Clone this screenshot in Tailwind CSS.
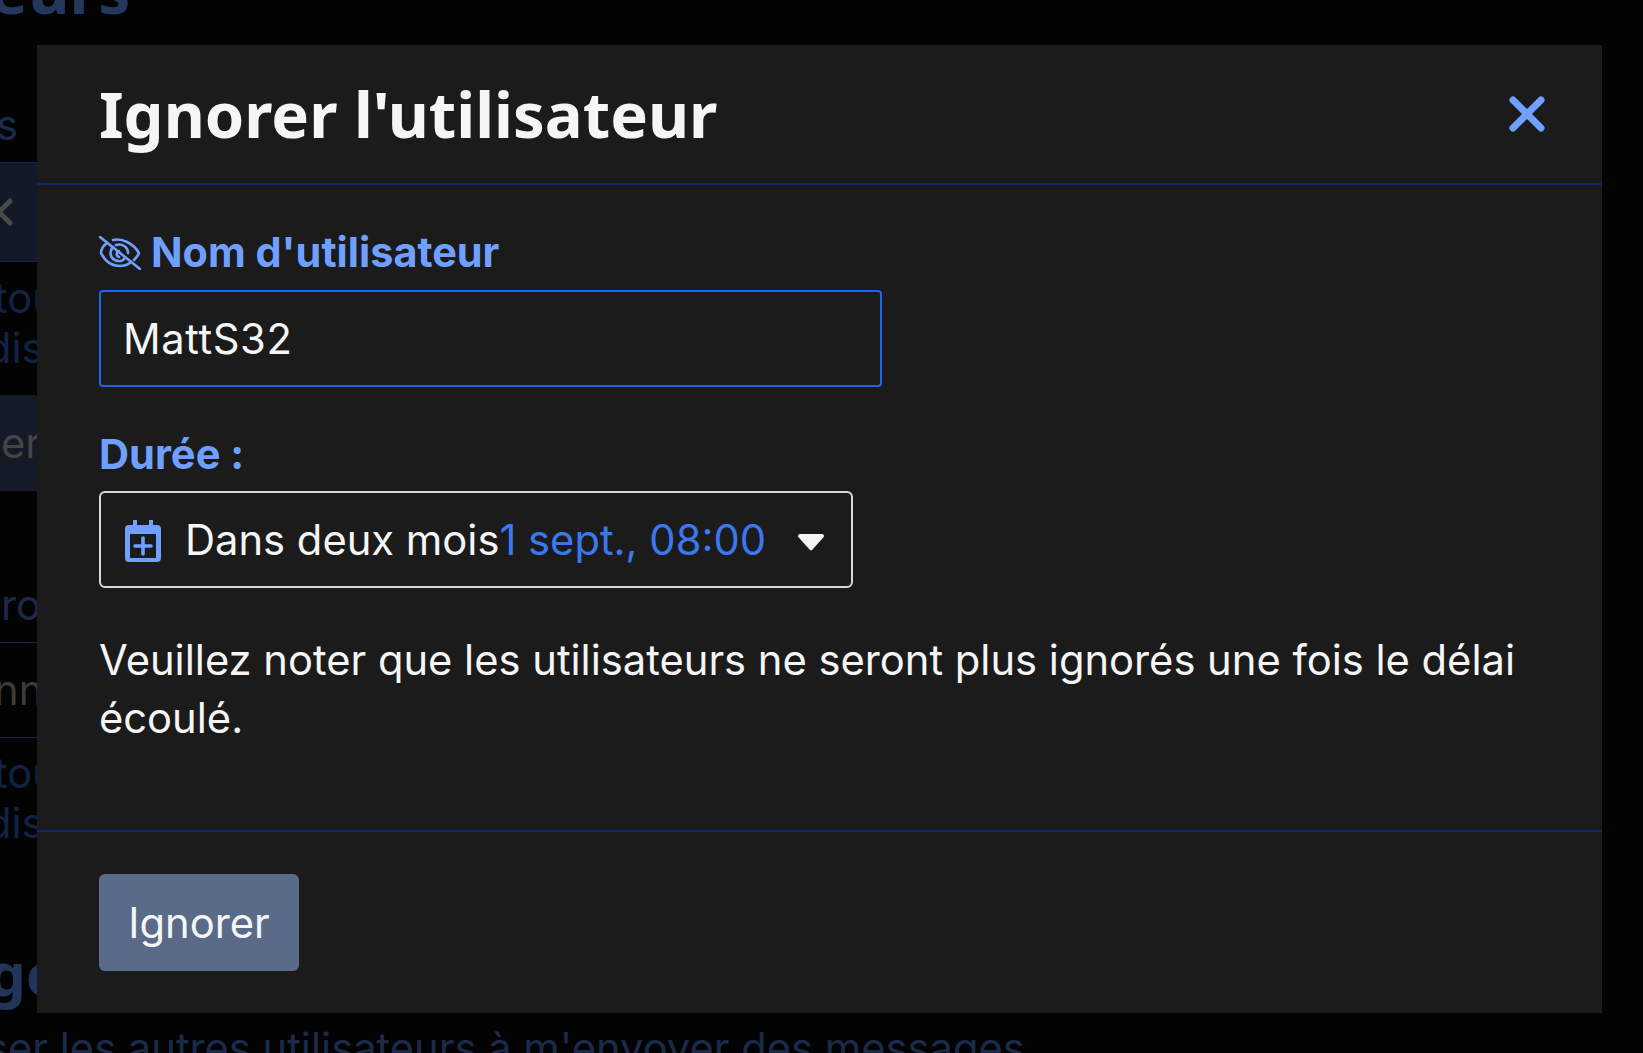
<!DOCTYPE html>
<html lang="fr"><head><meta charset="utf-8"><script src="https://cdn.jsdelivr.net/npm/@tailwindcss/browser@4"></script></head>
<body class="bg-[#030303]">
<div class="relative w-[1643px] h-[1053px] overflow-hidden bg-[#030303] font-['Inter',sans-serif]">
  <!-- dimmed page behind -->
  <div class="flex flex-col w-[1643px] h-[1053px] overflow-hidden [&>*]:shrink-0">
    <div class="h-[15px] -mt-[40px] mb-[40px] -ml-[242px] font-['Noto_Sans',sans-serif] font-bold text-[64px] leading-[60px] text-[#24375c] whitespace-nowrap">Utilisateurs</div>
    <div class="mt-[79px] h-[68px] -ml-[44px] text-[41.7px] leading-[62px] text-[#1b2a49] whitespace-nowrap">ers</div>
    <div class="h-[100px] w-[100px] flex items-center bg-[#131a27] border-y border-[#0f2552] text-[#444]">
      <svg class="-ml-[14px]" width="30" height="30" viewBox="0 0 30 30" fill="none" stroke="#4a4a4a" stroke-width="5" stroke-linecap="round" stroke-linejoin="round"><path d="M24 4 L13 15 L24 26"/></svg>
    </div>
    <div class="mt-[11px] -ml-[6px] text-[41.7px] leading-[50px] text-[#122245] whitespace-nowrap">
      <div>tout</div><div class="-ml-[8px]">disc</div>
    </div>
    <div class="mt-[22px] h-[96px] w-[100px] flex items-center bg-[#141a26] text-[41.7px] text-[#454545]"><span class="ml-[1px]">er</span></div>
    <div class="mt-[84px] ml-[1px] h-[67px] text-[41.7px] leading-[60px] text-[#1b2a49] whitespace-nowrap">ro</div>
    <div class="h-[96px] w-[100px] border-y border-[#0f2552] flex items-center text-[41.7px] text-[#3a3a3a]"><span class="-ml-[6px]">nn</span></div>
    <div class="mt-[10px] -ml-[6px] text-[41.7px] leading-[50px] text-[#122245] whitespace-nowrap">
      <div>tout</div><div class="-ml-[8px]">disc</div>
    </div>
    <div class="mt-[95px] -ml-[48px] h-[60px] font-['Noto_Sans',sans-serif] font-bold text-[60px] leading-[60px] text-[#22345a] whitespace-nowrap">age</div>
    <div class="mt-[20px] -ml-[14px] text-[41.7px] leading-[50px] text-[#1b2a49] whitespace-nowrap">ser les autres utilisateurs à m'envoyer des messages</div>
  </div>

  <!-- modal -->
  <div class="absolute left-[37px] top-[45px] w-[1565px] h-[968px] bg-[#1b1b1b] flex flex-col text-white">
    <div class="h-[140px] px-[62px] flex items-center justify-between border-b-2 border-[#0b2a6f] shrink-0">
      <h1 class="font-['Noto_Sans',sans-serif] font-bold text-[63.3px] leading-[80px] text-[#f5f5f5] whitespace-nowrap">Ignorer l'utilisateur</h1>
      <svg class="mr-[-5px]" width="36" height="36" viewBox="0 0 36 36" fill="none" stroke="#70a0ff" stroke-width="7" stroke-linecap="round"><path d="M4 4 L32 32 M32 4 L4 32"/></svg>
    </div>
    <div class="flex-1 px-[62px] pt-[43px]">
      <label class="flex items-center gap-[10px] h-[48px] text-[41.4px] font-bold text-[#70a0ff]">
        <svg class="mt-[2px]" width="42" height="34" viewBox="0 0 42 34" fill="none" stroke="#70a0ff" stroke-width="2.6" stroke-linecap="round" stroke-linejoin="round"><path d="M1 1 L41 33"/><path d="M8 7 C4 10 2 13 2 17 C6 25 13 30 21 30 C25 30 28 29 31 27"/><path d="M14 4 C23 2 34 7 40 17 C39 20 37 22 35 24"/><path d="M14 11 C10 15 11 22 16 24 C20 26 24 25 26 22"/><path d="M17 9 C23 7 29 11 29 17"/><path d="M20 15 C17 16 17 20 20 21"/></svg>
        <span>Nom d'utilisateur</span>
      </label>
      <div class="mt-[14px] w-[783px] h-[97px] border-2 border-[#1d64f0] rounded-[4px] flex items-center px-[22px] pt-[2px] text-[41.7px] tracking-[0.6px] text-[#f5f5f5]">MattS32</div>
      <div class="mt-[43px] h-[48px] leading-[48px] text-[41.6px] font-bold text-[#70a0ff]">Durée :</div>
      <div class="mt-[13px] w-[754px] h-[97px] border-2 border-[#d5d8e0] rounded-[6px] flex items-center pl-[23px] pt-[2px] text-[41.7px]">
        <svg width="38" height="42" viewBox="0 0 38 42" fill="#70a0ff" class="mr-[23px] shrink-0"><path d="M9 1 a2 2 0 0 1 4 0 V5 H25 V1 a2 2 0 0 1 4 0 V5 H33 a4 4 0 0 1 4 4 V38 a4 4 0 0 1 -4 4 H5 a4 4 0 0 1 -4 -4 V9 a4 4 0 0 1 4 -4 H9 Z"/><rect x="6" y="14" width="26" height="24" fill="#1b1b1b"/><path d="M19 18 V34 M11 26 H27" stroke="#70a0ff" stroke-width="3.6" stroke-linecap="round"/></svg>
        <span class="text-[#f5f5f5] whitespace-nowrap">Dans deux mois</span><span class="text-[#3b78f0] whitespace-nowrap">1 sept., 08:00</span>
        <svg class="ml-[31px] mt-[3px] shrink-0" width="28" height="18" viewBox="0 0 28 18" fill="#f5f5f5"><path d="M3 1 H25 a2 2 0 0 1 1.5 3.3 L15.5 16.5 a2 2 0 0 1 -3 0 L1.5 4.3 A2 2 0 0 1 3 1 Z"/></svg>
      </div>
      <p class="mt-[43px] text-[41.7px] leading-[58px] text-[#f5f5f5]">Veuillez noter que les utilisateurs ne seront plus ignorés une fois le délai écoulé.</p>
    </div>
    <div class="h-[183px] px-[62px] pt-[42px] border-t-2 border-[#0b2a6f] shrink-0">
      <button class="w-[200px] h-[97px] bg-[#5a6b8a] rounded-[6px] pt-[2px] text-[41.7px] text-[#f5f5f5]">Ignorer</button>
    </div>
  </div>
</div>
</body></html>
